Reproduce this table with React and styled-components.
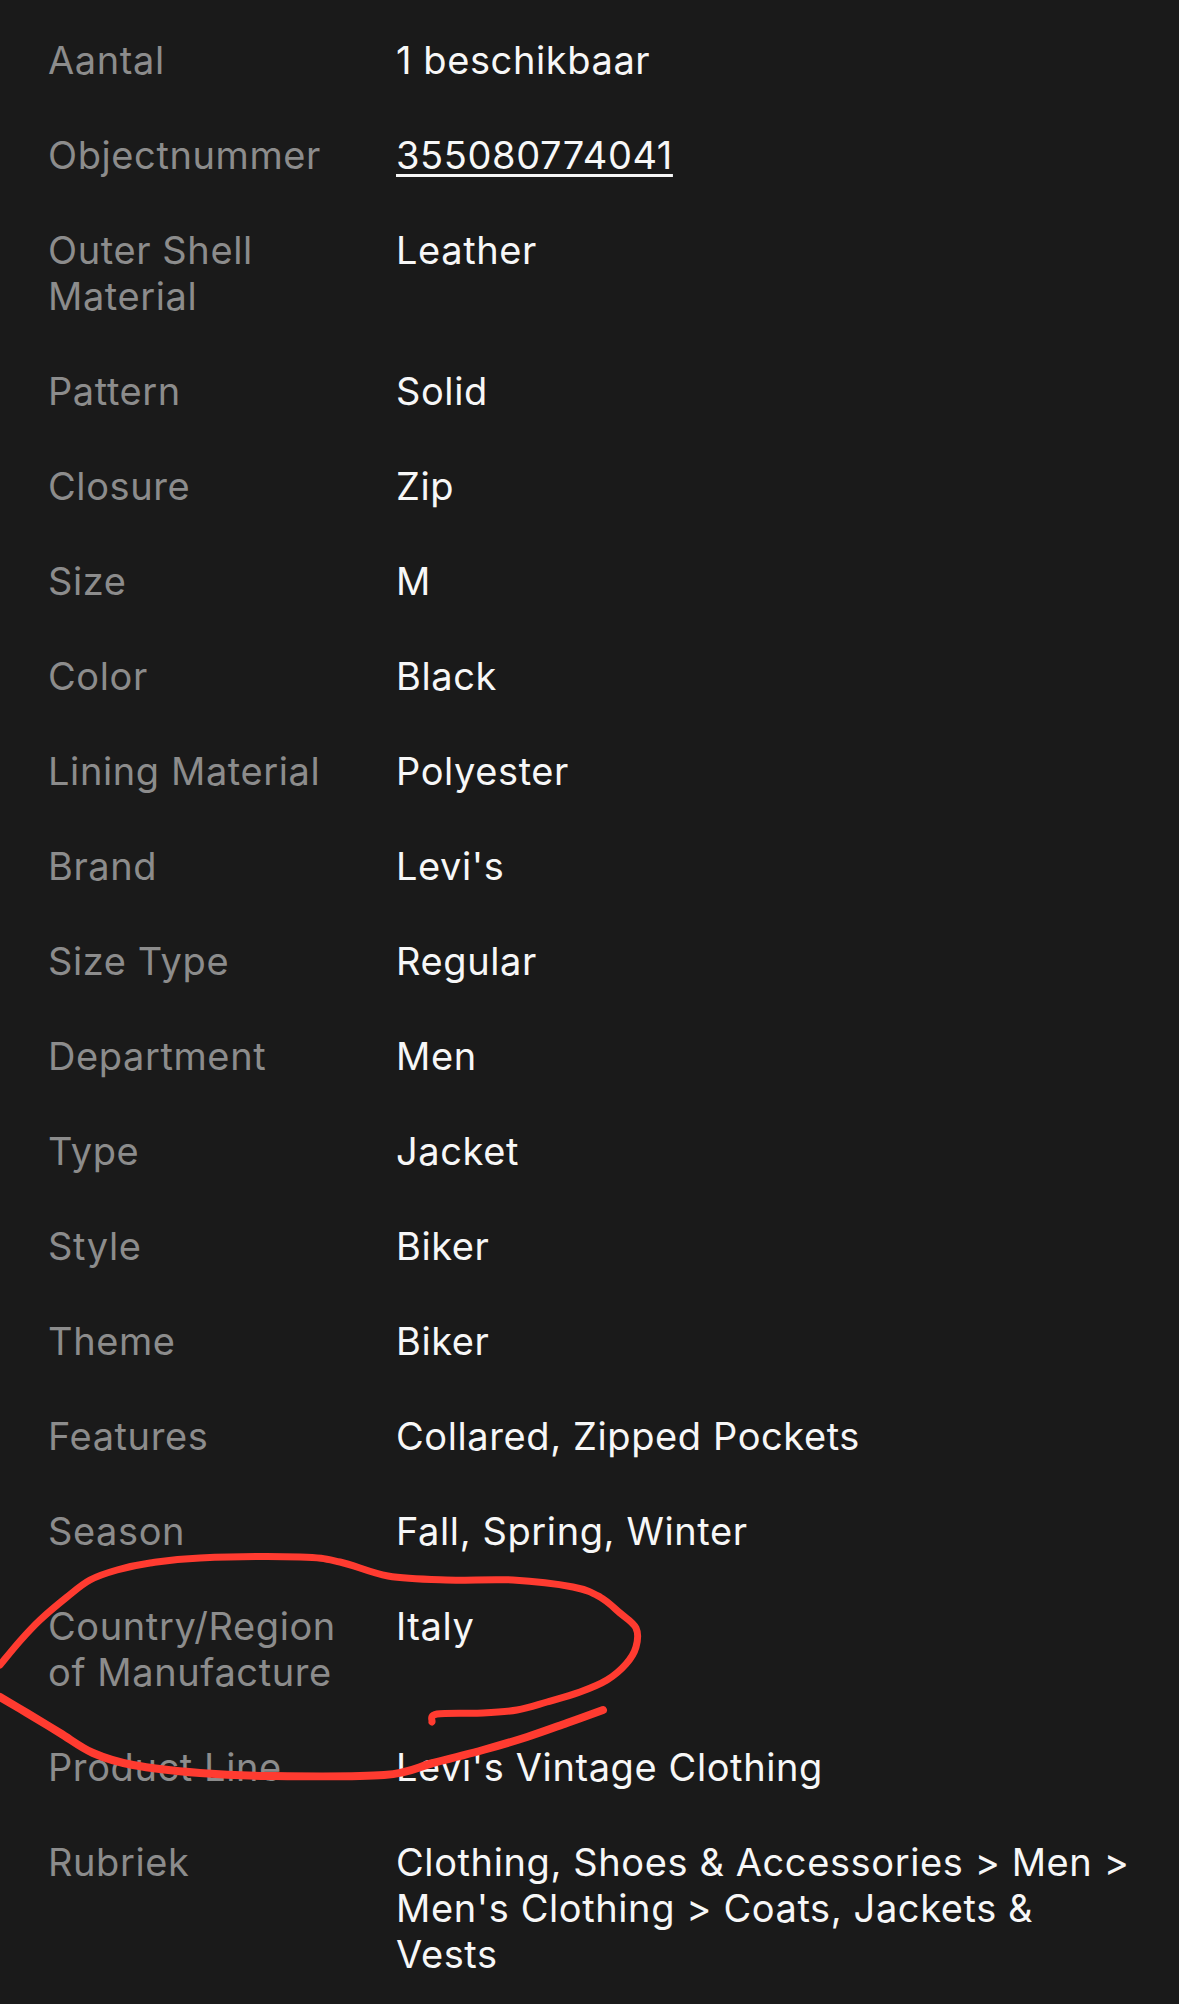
import React from 'react'
import styled, { createGlobalStyle } from 'styled-components'

const GlobalStyle = createGlobalStyle`
    html, body {
        margin: 0;
        padding: 0;
        background: #1a1a1a;
    }
`

const Page = styled.div`
    position: relative;
    width: 1179px;
    min-height: 2004px;
    box-sizing: border-box;
    background: #1a1a1a;
    padding: 37px 46px 0 48px;
    font-family: Inter, "Open Sans", sans-serif;
    font-size: 38px;
    letter-spacing: 0.6px;
    line-height: 46px;
    overflow: hidden;
`

const Specs = styled.dl`
    display: flex;
    flex-direction: column;
    gap: 49px;
    margin: 0;
`

const Row = styled.div`
    display: grid;
    grid-template-columns: 348px 1fr;
`

const Label = styled.dt`
    color: #8c8c8c;
    padding-right: 14px;
    margin: 0;
`

const Value = styled.dd`
    color: #f7f7f7;
    margin: 0;
`

const ItemLink = styled.a`
    color: #f7f7f7;
    text-decoration: underline;
    text-decoration-thickness: 3px;
    text-underline-offset: 5px;
`

const Scribble = styled.svg`
    position: absolute;
    top: 0;
    left: 0;
    pointer-events: none;
`

const specs = [
    ['Aantal', '1 beschikbaar'],
    ['Objectnummer', '355080774041', true],
    ['Outer Shell Material', 'Leather'],
    ['Pattern', 'Solid'],
    ['Closure', 'Zip'],
    ['Size', 'M'],
    ['Color', 'Black'],
    ['Lining Material', 'Polyester'],
    ['Brand', "Levi's"],
    ['Size Type', 'Regular'],
    ['Department', 'Men'],
    ['Type', 'Jacket'],
    ['Style', 'Biker'],
    ['Theme', 'Biker'],
    ['Features', 'Collared, Zipped Pockets'],
    ['Season', 'Fall, Spring, Winter'],
    ['Country/Region of Manufacture', 'Italy'],
    ['Product Line', "Levi's Vintage Clothing"],
    ['Rubriek', "Clothing, Shoes & Accessories > Men > Men's Clothing > Coats, Jackets & Vests"],
]

// hand drawn circle round the country row
const loop = [
    [0, 1665], [20, 1641], [40, 1620], [67, 1597], [90, 1580], [117, 1570], [150, 1563],
    [200, 1558], [300, 1557], [340, 1562], [388, 1576], [446, 1580], [513, 1580],
    [573, 1587], [600, 1597], [620, 1613], [636, 1628], [636, 1647], [626, 1664],
    [607, 1680], [580, 1692], [547, 1702], [517, 1710], [483, 1713], [437, 1714], [432, 1722],
]
const tail = [
    [0, 1697], [27, 1713], [60, 1733], [93, 1753], [133, 1765], [200, 1773], [268, 1776],
    [384, 1775], [433, 1763], [483, 1750], [527, 1737], [567, 1723], [603, 1710],
]

function smooth(pts) {
    let d = `M${pts[0][0]},${pts[0][1]}`
    for (let i = 0; i < pts.length - 1; i++) {
        const p0 = pts[i - 1] || pts[i]
        const p1 = pts[i]
        const p2 = pts[i + 1]
        const p3 = pts[i + 2] || p2
        const c1 = [p1[0] + (p2[0] - p0[0]) / 6, p1[1] + (p2[1] - p0[1]) / 6]
        const c2 = [p2[0] - (p3[0] - p1[0]) / 6, p2[1] - (p3[1] - p1[1]) / 6]
        d += ` C${c1[0]},${c1[1]} ${c2[0]},${c2[1]} ${p2[0]},${p2[1]}`
    }
    return d
}

function App() {
    return (
        <Page>
            <GlobalStyle />
            <Specs>
                {specs.map(([label, value, link]) => (
                    <Row key={label}>
                        <Label>{label}</Label>
                        <Value>{link ? <ItemLink href="#">{value}</ItemLink> : value}</Value>
                    </Row>
                ))}
            </Specs>
            <Scribble width="1179" height="2004" viewBox="0 0 1179 2004">
                <path d={smooth(loop)} fill="none" stroke="#ff3b30" strokeWidth="7" strokeLinecap="round" strokeLinejoin="round" />
                <path d={smooth(tail)} fill="none" stroke="#ff3b30" strokeWidth="8" strokeLinecap="round" strokeLinejoin="round" />
            </Scribble>
        </Page>
    )
}

export default App
